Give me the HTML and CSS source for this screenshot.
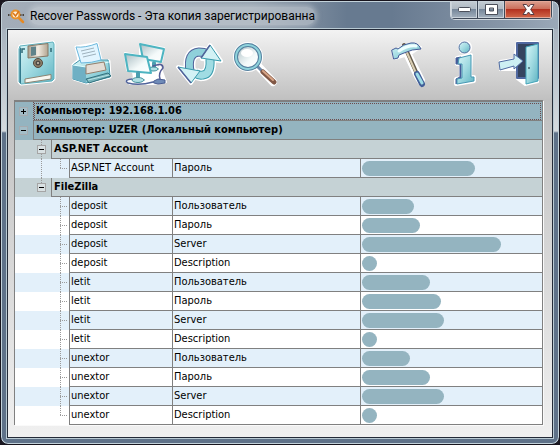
FILE: index.html
```html
<!DOCTYPE html>
<html lang="ru">
<head>
<meta charset="utf-8">
<title>Recover Passwords</title>
<link rel="stylesheet" href="styles.css">
</head>
<body>
<div class="window">
  <header class="titlebar">
    <svg class="app-icon" width="18" height="18" viewBox="7 5 18 18" fill="none" aria-hidden="true">
      <path d="M8 14H12M20 14H24" stroke="#2d2114" stroke-width="1.5" stroke-dasharray="1.5 1"/>
      <path d="M19 17L23 21" stroke="#e58a25" stroke-width="2.5" stroke-linecap="round"/>
      <circle cx="15.500" cy="13.500" r="4" fill="#fff0d8" stroke="#e8922c" stroke-width="2"/>
      <path d="M13 12L15.500 15L19 10" stroke="#d9761a" stroke-width="1.500"/>
    </svg>
    <h1 class="title"><span>Recover Passwords - Эта копия зарегистрированна</span></h1>
    <div class="caption-buttons">
      <button class="caption minimize" type="button" aria-label="Свернуть"><svg width="13" height="7" viewBox="0 0 13 7"><rect x=".5" y="1.500" width="12" height="4" rx="1" fill="#fff" stroke="#4b4f5a"/></svg></button>
      <button class="caption maximize" type="button" aria-label="Развернуть"><svg width="13" height="11" viewBox="0 0 13 11"><path fill-rule="evenodd" d="M.5 .5H12.500V10.500H.5ZM4.500 4V7H8.500V4Z" fill="#fff" stroke="#4b4f5a"/></svg></button>
      <button class="caption close" type="button" aria-label="Закрыть"><svg width="13" height="11" viewBox="0 0 13 11"><path d="M1 .5H4.500L6.500 3L8.500 .5H12L8.700 5.500L12 10.500H8.500L6.500 8L4.500 10.500H1L4.300 5.500Z" fill="#fff" stroke="#5a3f45"/></svg></button>
    </div>
  </header>
  <main class="client">
    <nav class="toolbar" aria-label="Панель инструментов">
      <button class="tool" type="button" aria-label="Сохранить">
        <svg width="48" height="48" viewBox="13 40 48 48">
          <defs>
            <linearGradient id="aqua" x1="0" y1="0" x2="1" y2="1"><stop offset="0" stop-color="#d9f6f8"/><stop offset=".5" stop-color="#a0dae1"/><stop offset="1" stop-color="#5fb3c2"/></linearGradient>
            <linearGradient id="pale" x1="0" y1="0" x2="1" y2="1"><stop offset="0" stop-color="#a9bcc2"/><stop offset=".6" stop-color="#f4fafa"/><stop offset="1" stop-color="#fff"/></linearGradient>
            <linearGradient id="metal" x1="0" y1="0" x2="1" y2="0"><stop offset="0" stop-color="#a89c8c"/><stop offset=".5" stop-color="#f1ece2"/><stop offset="1" stop-color="#b3a591"/></linearGradient>
          </defs>
          <path d="M20 46L53 42L54 44V79L52 81L21 84L19 82V49Z" fill="#fff" stroke="#fff" stroke-width="3" stroke-linejoin="round"/>
          <path d="M20 46L53 42L54 44V79L52 81L21 84L19 82V49Z" fill="url(#aqua)" stroke="#5fb0bd"/>
          <path d="M19.500 49V82L21 84V47Z" fill="#33798c"/>
          <path d="M28 46L48 43.500V56L28 58Z" fill="url(#metal)" stroke="#857866"/>
          <path d="M31 47L36 46.500V55L31 56Z" fill="#5f838a"/>
          <path d="M22 53V49H25M51 48V52" fill="none" stroke="#306a76" stroke-width="1.500"/>
          <circle cx="38" cy="63" r="4.500" fill="#8f8069" stroke="#51483e"/><circle cx="38" cy="63" r="2.500" fill="#4e4a46"/><circle cx="38" cy="63" r="1" fill="#d3c8b6"/>
          <path d="M25 79L51 74.500V79L25 83Z" fill="#f8f7f1" stroke="#8b8472"/>
        </svg>
      </button>
      <button class="tool" type="button" aria-label="Печать">
        <svg width="48" height="48" viewBox="67 40 48 48" stroke-linejoin="round">
          <path d="M76 47L97 43.500L101 60L109 61L110 77L87 83L74 79L73 65L79 60Z" fill="#fff" stroke="#fff" stroke-width="3"/>
          <path d="M73 65L80 60L108 60L109 64L110 77L86 83L73 79Z" fill="url(#aqua)" stroke="#3f93aa"/>
          <path d="M73 65L86 67V83L73 79Z" fill="#6fb0c4"/><path d="M73 65L86 67L109 62" fill="none" stroke="#e0ffff"/>
          <path d="M76 47Q85 48 97 43.500L101 60Q92 63 81 63Z" fill="#e2f5ff" stroke="#6bb8dd"/>
          <path d="M81 51L94 48M82 54L95 51M83 57L96 54" stroke="#9fb2bd"/>
          <path d="M86 65L104 62L106 70L86 74Z" fill="#e3ddd5" stroke="#957f6c"/>
          <path d="M86 79L108 73L111 76L89 83Z" fill="#75b3ba" stroke="#34717e"/><path d="M88 80L109 75" stroke="#b9e4e7"/>
        </svg>
      </button>
      <button class="tool" type="button" aria-label="Сеть">
        <svg width="48" height="48" viewBox="121 40 48 48" stroke-linejoin="round" stroke-linecap="round">
          <path d="M140 44L164 48L162 61L155 63L158 69L160 66L166 82L153 84L130 84L126 81L134 78L133 72L127 70L125 53L140 56Z" fill="#fff" stroke="#fff" stroke-width="2"/>
          <path d="M154 63V68" stroke="#4a9eb0" stroke-width="4"/><ellipse cx="153" cy="69" rx="5" ry="2" fill="#b0e0e4" stroke="#45929e"/>
          <path d="M140 44L164 49L161 62L143 59Z" fill="url(#pale)" stroke="#4db4c1" stroke-width="2"/>
          <path d="M125 54L147 57L151 73L128 71Z" fill="url(#pale)" stroke="#4db4c1" stroke-width="2"/>
          <path d="M138 73V79" stroke="#4a9eb0" stroke-width="4"/><ellipse cx="138" cy="80" rx="6" ry="2.500" fill="#b0e0e4" stroke="#45929e"/>
          <path d="M132 79Q123 80 128 83Q139 86 153 82" fill="none" stroke="#50639a" stroke-width="1.500"/>
          <path d="M153 66Q163 62 163 68Q158 73 160 79" fill="none" stroke="#535c96" stroke-width="1.500"/>
          <path d="M154 81L158 79L165 80V83L158 84L154 83Z" fill="#6f8bb8" stroke="#475b91"/>
        </svg>
      </button>
      <button class="tool" type="button" aria-label="Обновить">
        <svg width="48" height="48" viewBox="175 40 48 48" stroke-linejoin="round" fill="none">
          <path d="M190 71Q187 53 199 52Q204 52 208 54M210 59Q211 74 203 75Q199 76 195 73" stroke="#fff" stroke-width="12"/>
          <path d="M178 67L199 71L191 83ZM210 45L221 61L202 59Z" fill="#fff" stroke="#fff" stroke-width="4"/>
          <path d="M190 71Q187 53 199 52Q204 52 208 54" stroke="#51639a" stroke-width="9"/>
          <path d="M190 71Q187 53 199 52Q204 52 208 54" stroke="#8fd0da" stroke-width="7"/>
          <path d="M210 59Q211 74 203 75Q199 76 195 73" stroke="#389bad" stroke-width="9"/>
          <path d="M210 59Q211 74 203 75Q199 76 195 73" stroke="#a0dce3" stroke-width="7"/>
          <path d="M178 67L200 71L191 83Z" fill="#d2f2f5" stroke="#389bad"/>
          <path d="M210 45L221 61L201 58Z" fill="#d2f2f5" stroke="#389bad"/>
          <path d="M178 67L191 83M201 58L210 45" stroke="#51639a" stroke-width="1.500"/>
        </svg>
      </button>
      <button class="tool" type="button" aria-label="Поиск">
        <svg width="48" height="48" viewBox="229 40 48 48" stroke-linecap="round">
          <path d="M258 66L273 82" stroke="#fff" stroke-width="8"/><circle cx="248" cy="57" r="15" fill="#fff"/>
          <path d="M257 66L262 71" stroke="#6a88a9" stroke-width="3"/><path d="M263 72L274 82" stroke="#815846" stroke-width="5"/><path d="M263 71L273 80" stroke="#d7a486" stroke-width="2"/>
          <circle cx="248" cy="57" r="12" fill="url(#pale)" stroke="#54809f" stroke-width="4"/>
          <circle cx="248" cy="57" r="12" fill="none" stroke="#8fd3dc" stroke-width="2"/>
          <ellipse cx="247" cy="53" rx="6" ry="4" fill="#fff"/>
        </svg>
      </button>
      <span class="spacer"></span>
      <button class="tool" type="button" aria-label="Настройки">
        <svg width="48" height="48" viewBox="387 40 48 48" stroke-linejoin="round" stroke-linecap="round">
          <path d="M393 51L409 44L421 47L411 54L424 80L421 86L416 79L405 56L394 59Z" fill="#fff" stroke="#fff" stroke-width="2"/>
          <path d="M404 45L417 74" stroke="#655b4b" stroke-width="4"/><path d="M404 46L416 73" stroke="#d9ceb3" stroke-width="2"/>
          <path d="M417 74L422 84" stroke="#435f98" stroke-width="6"/><path d="M417 74L422 83" stroke="#9edce6" stroke-width="3"/>
          <path d="M392 50L396 48L398 49Q403 44 411 43Q418 42 421 49Q412 49 404 53L399 55L398 58L394 59Z" fill="url(#aqua)" stroke="#455c98"/>
          <path d="M399 51Q408 45 416 46" fill="none" stroke="#efffff" stroke-width="3"/>
        </svg>
      </button>
      <button class="tool" type="button" aria-label="О программе">
        <svg width="48" height="48" viewBox="441 40 48 48" stroke-linejoin="round">
          <path d="M457 58L471 55L470 77L474 77V81L456 84V79L461 78V64L457 64Z" fill="#fff" stroke="#fff" stroke-width="4"/><circle cx="465" cy="47.500" r="7" fill="#fff"/>
          <path d="M456 58L461 57V80L456 84V79L460 77V64H456Z" fill="#465d99" stroke="#465d99"/>
          <path d="M459 58L471 55V77L474 77V81L457 84V79L462 78V64L458 64Z" fill="url(#aqua)" stroke="#4698b4"/>
          <circle cx="464.500" cy="47.500" r="5.500" fill="url(#aqua)" stroke="#506a9c"/>
        </svg>
      </button>
      <button class="tool" type="button" aria-label="Выход">
        <svg width="48" height="48" viewBox="495 40 48 48" stroke-linejoin="round">
          <path d="M517 42H538V82L525 85L517 79V70L500 70V61L514 59Z" fill="#fff" stroke="#fff" stroke-width="2"/>
          <path d="M517 43H538V78H517Z" fill="#35445f" stroke="#5068a0" stroke-width="2"/>
          <path d="M526 47L538 44V81L526 84Z" fill="url(#aqua)" stroke="#42a4b9"/>
          <circle cx="529" cy="68" r="1" fill="#46656f"/>
          <path d="M499 62L514 59V54L523 61L514 69V66L500 70Z" fill="#cdeff3" stroke="#4e69a0"/>
        </svg>
      </button>
    </nav>
    <table class="tree">
      <colgroup><col class="c-root"><col class="c-branch"><col class="c-branch"><col class="c-name"><col class="c-kind"><col></colgroup>
      <tbody>
        <tr class="host selected"><td><button class="toggle plus" type="button" aria-label="Развернуть узел"></button></td><th colspan="5">Компьютер: 192.168.1.06</th></tr>
        <tr class="host"><td><button class="toggle" type="button" aria-label="Свернуть узел"></button></td><th colspan="5">Компьютер: UZER (Локальный компьютер)</th></tr>
        <tr class="group"><td></td><td class="line"><button class="toggle" type="button" aria-label="Свернуть узел"></button></td><th colspan="4">ASP.NET Account</th></tr>
        <tr class="odd"><td></td><td class="line"></td><td class="leaf last"></td><td class="cell">ASP.NET Account</td><td class="cell">Пароль</td><td class="cell value"><span class="mask" style="width:113px"></span></td></tr>
        <tr class="group"><td></td><td class="line-end"><button class="toggle" type="button" aria-label="Свернуть узел"></button></td><th colspan="4">FileZilla</th></tr>
        <tr class="odd"><td></td><td></td><td class="leaf"></td><td class="cell">deposit</td><td class="cell">Пользователь</td><td class="cell value"><span class="mask" style="width:52px"></span></td></tr>
        <tr><td></td><td></td><td class="leaf"></td><td class="cell">deposit</td><td class="cell">Пароль</td><td class="cell value"><span class="mask" style="width:58px"></span></td></tr>
        <tr class="odd"><td></td><td></td><td class="leaf"></td><td class="cell">deposit</td><td class="cell">Server</td><td class="cell value"><span class="mask" style="width:139px"></span></td></tr>
        <tr><td></td><td></td><td class="leaf"></td><td class="cell">deposit</td><td class="cell">Description</td><td class="cell value"><span class="mask" style="width:15px"></span></td></tr>
        <tr class="odd"><td></td><td></td><td class="leaf"></td><td class="cell">letit</td><td class="cell">Пользователь</td><td class="cell value"><span class="mask" style="width:68px"></span></td></tr>
        <tr><td></td><td></td><td class="leaf"></td><td class="cell">letit</td><td class="cell">Пароль</td><td class="cell value"><span class="mask" style="width:79px"></span></td></tr>
        <tr class="odd"><td></td><td></td><td class="leaf"></td><td class="cell">letit</td><td class="cell">Server</td><td class="cell value"><span class="mask" style="width:82px"></span></td></tr>
        <tr><td></td><td></td><td class="leaf"></td><td class="cell">letit</td><td class="cell">Description</td><td class="cell value"><span class="mask" style="width:15px"></span></td></tr>
        <tr class="odd"><td></td><td></td><td class="leaf"></td><td class="cell">unextor</td><td class="cell">Пользователь</td><td class="cell value"><span class="mask" style="width:48px"></span></td></tr>
        <tr><td></td><td></td><td class="leaf"></td><td class="cell">unextor</td><td class="cell">Пароль</td><td class="cell value"><span class="mask" style="width:68px"></span></td></tr>
        <tr class="odd"><td></td><td></td><td class="leaf"></td><td class="cell">unextor</td><td class="cell">Server</td><td class="cell value"><span class="mask" style="width:82px"></span></td></tr>
        <tr><td></td><td></td><td class="leaf last"></td><td class="cell">unextor</td><td class="cell">Description</td><td class="cell value"><span class="mask" style="width:15px"></span></td></tr>
      </tbody>
    </table>
  </main>
</div>
</body>
</html>
```
FILE: styles.css
```css
* { box-sizing: border-box; }

body {
  margin: 0;
  background: #1a1720;
  font-family: "DejaVu Sans Condensed", "Noto Sans", sans-serif;
  font-size: 11px;
  color: #000;
}

button {
  margin: 0;
  padding: 0;
  border: 0;
  background: none;
}

svg { display: block; }

/* Window frame */
.window {
  display: flex;
  flex-direction: column;
  min-height: 100vh;
  padding: 0 6px 6px;
  border: 1px solid #17141d;
  border-radius: 8px;
  background:
    linear-gradient(90deg, transparent 70%, #8796a8 90%, #9ba9b8) top / 100% 28px no-repeat,
    linear-gradient(90deg, #a3adb9, #98a4b1 45%, #677a90 62%, #677a90) top / 100% 28px no-repeat,
    linear-gradient(#9ba7b5, #d5dade 130px, #5f7289 132px, #5f7289);
  box-shadow: inset 0 0 0 1px #c3d2da;
}

.titlebar {
  display: flex;
  align-items: flex-start;
  height: 28px;
}

.app-icon { margin-top: 5px; }

.title {
  flex: 1;
  margin: 0;
  padding: 6px 0 0 5px;
  font: 12px/18px Roboto, "Open Sans", sans-serif;
  white-space: nowrap;
}

.title span {
  display: inline-block;
  border-radius: 8px;
  background: rgb(205 211 218 / 50%);
  box-shadow: 0 0 5px 2px rgb(205 211 218 / 50%);
}

.caption-buttons {
  display: flex;
  border: 1px solid #d0d7dd;
  border-top: 0;
  border-radius: 0 0 5px 5px;
  overflow: hidden;
}

.caption {
  display: flex;
  align-items: center;
  justify-content: center;
  width: 27px;
  height: 18px;
  border: 1px solid #3e4857;
  border-top: 0;
  border-left: 0;
  background: linear-gradient(#c4ccd3, #aeb8c2 48%, #76879a 50%, #a3b0bd);
  box-shadow: inset 0 0 0 1px #c9d2da;
}

.caption.close {
  width: 47px;
  background: linear-gradient(#dca090, #cb6d59 48%, #b43220 50%, #d2694b);
  box-shadow: inset 0 0 0 1px #e4a898;
}

/* Client area */
.client {
  flex: 1;
  border: 1px solid #242b38;
  background: linear-gradient(#f3f3f3, #c0c0c0 70px, #f0f0f0);
  box-shadow: 0 0 0 1px #b9cad3;
  padding-bottom: 12px;
}

.toolbar {
  display: flex;
  padding: 10px 6px 12px 2px;
}

.tool {
  display: flex;
  justify-content: center;
  width: 54px;
}

.spacer { flex: 1; }

/* Tree list */
.tree {
  width: calc(100% - 15px);
  margin-left: 6px;
  border-spacing: 0;
  table-layout: fixed;
  border: 1px solid #808080;
  border-top-width: 2px;
  border-bottom: 0;
  background: #fff;
  box-shadow: 1px 1px 0 0 #fafafa;
}

.c-root { width: 18px; }
.c-branch { width: 18px; }
.c-name { width: 103px; }
.c-kind { width: 188px; }

td, th {
  height: 19px;
  padding: 0;
  line-height: 18px;
  white-space: nowrap;
}

th {
  padding-left: 2px;
  border-left: 1px solid #808080;
  border-bottom: 1px solid #808080;
  text-align: left;
}

.host { background: #94b4c0; }
.group { background: #c5d2d5; }
.odd { background: #e3f0fa; }

.selected th {
  border-left: 1px dotted #6d4c4c;
  outline: 1px dotted #6d4c4c;
  outline-offset: -2px;
}

.cell {
  padding-left: 1px;
  border-left: 1px solid #808080;
  border-bottom: 1px solid #808080;
}

.mask {
  display: block;
  height: 15px;
  margin-top: 1px;
  border-radius: 8px;
  background: #94b4c0;
}

/* Connectors between the tree nodes */
.line, .line-end {
  background: repeating-linear-gradient(#9a9a9a 0 1px, transparent 1px 2px) 8px 0 / 1px 100% no-repeat;
}

.line-end { background-size: 1px 9px; }

.leaf {
  background:
    repeating-linear-gradient(#9a9a9a 0 1px, transparent 1px 2px) 9px 0 / 1px 100% no-repeat,
    repeating-linear-gradient(90deg, #9a9a9a 0 1px, transparent 1px 2px) 9px 9px / 8px 1px no-repeat;
}

.leaf.last { background-size: 1px 9px, 8px 1px; }

.toggle {
  display: block;
  width: 9px;
  height: 9px;
  margin-left: 4px;
  border: 1px solid #a5a5a5;
  background: linear-gradient(#000, #000) center / 5px 1px no-repeat, #d9e1e3;
}

.host .toggle { border-color: #a5abb0; background-color: #a3bdc7; }

.toggle.plus {
  background:
    linear-gradient(#000, #000) center / 5px 1px no-repeat,
    linear-gradient(#000, #000) center / 1px 5px no-repeat,
    #a3bdc7;
}
```
